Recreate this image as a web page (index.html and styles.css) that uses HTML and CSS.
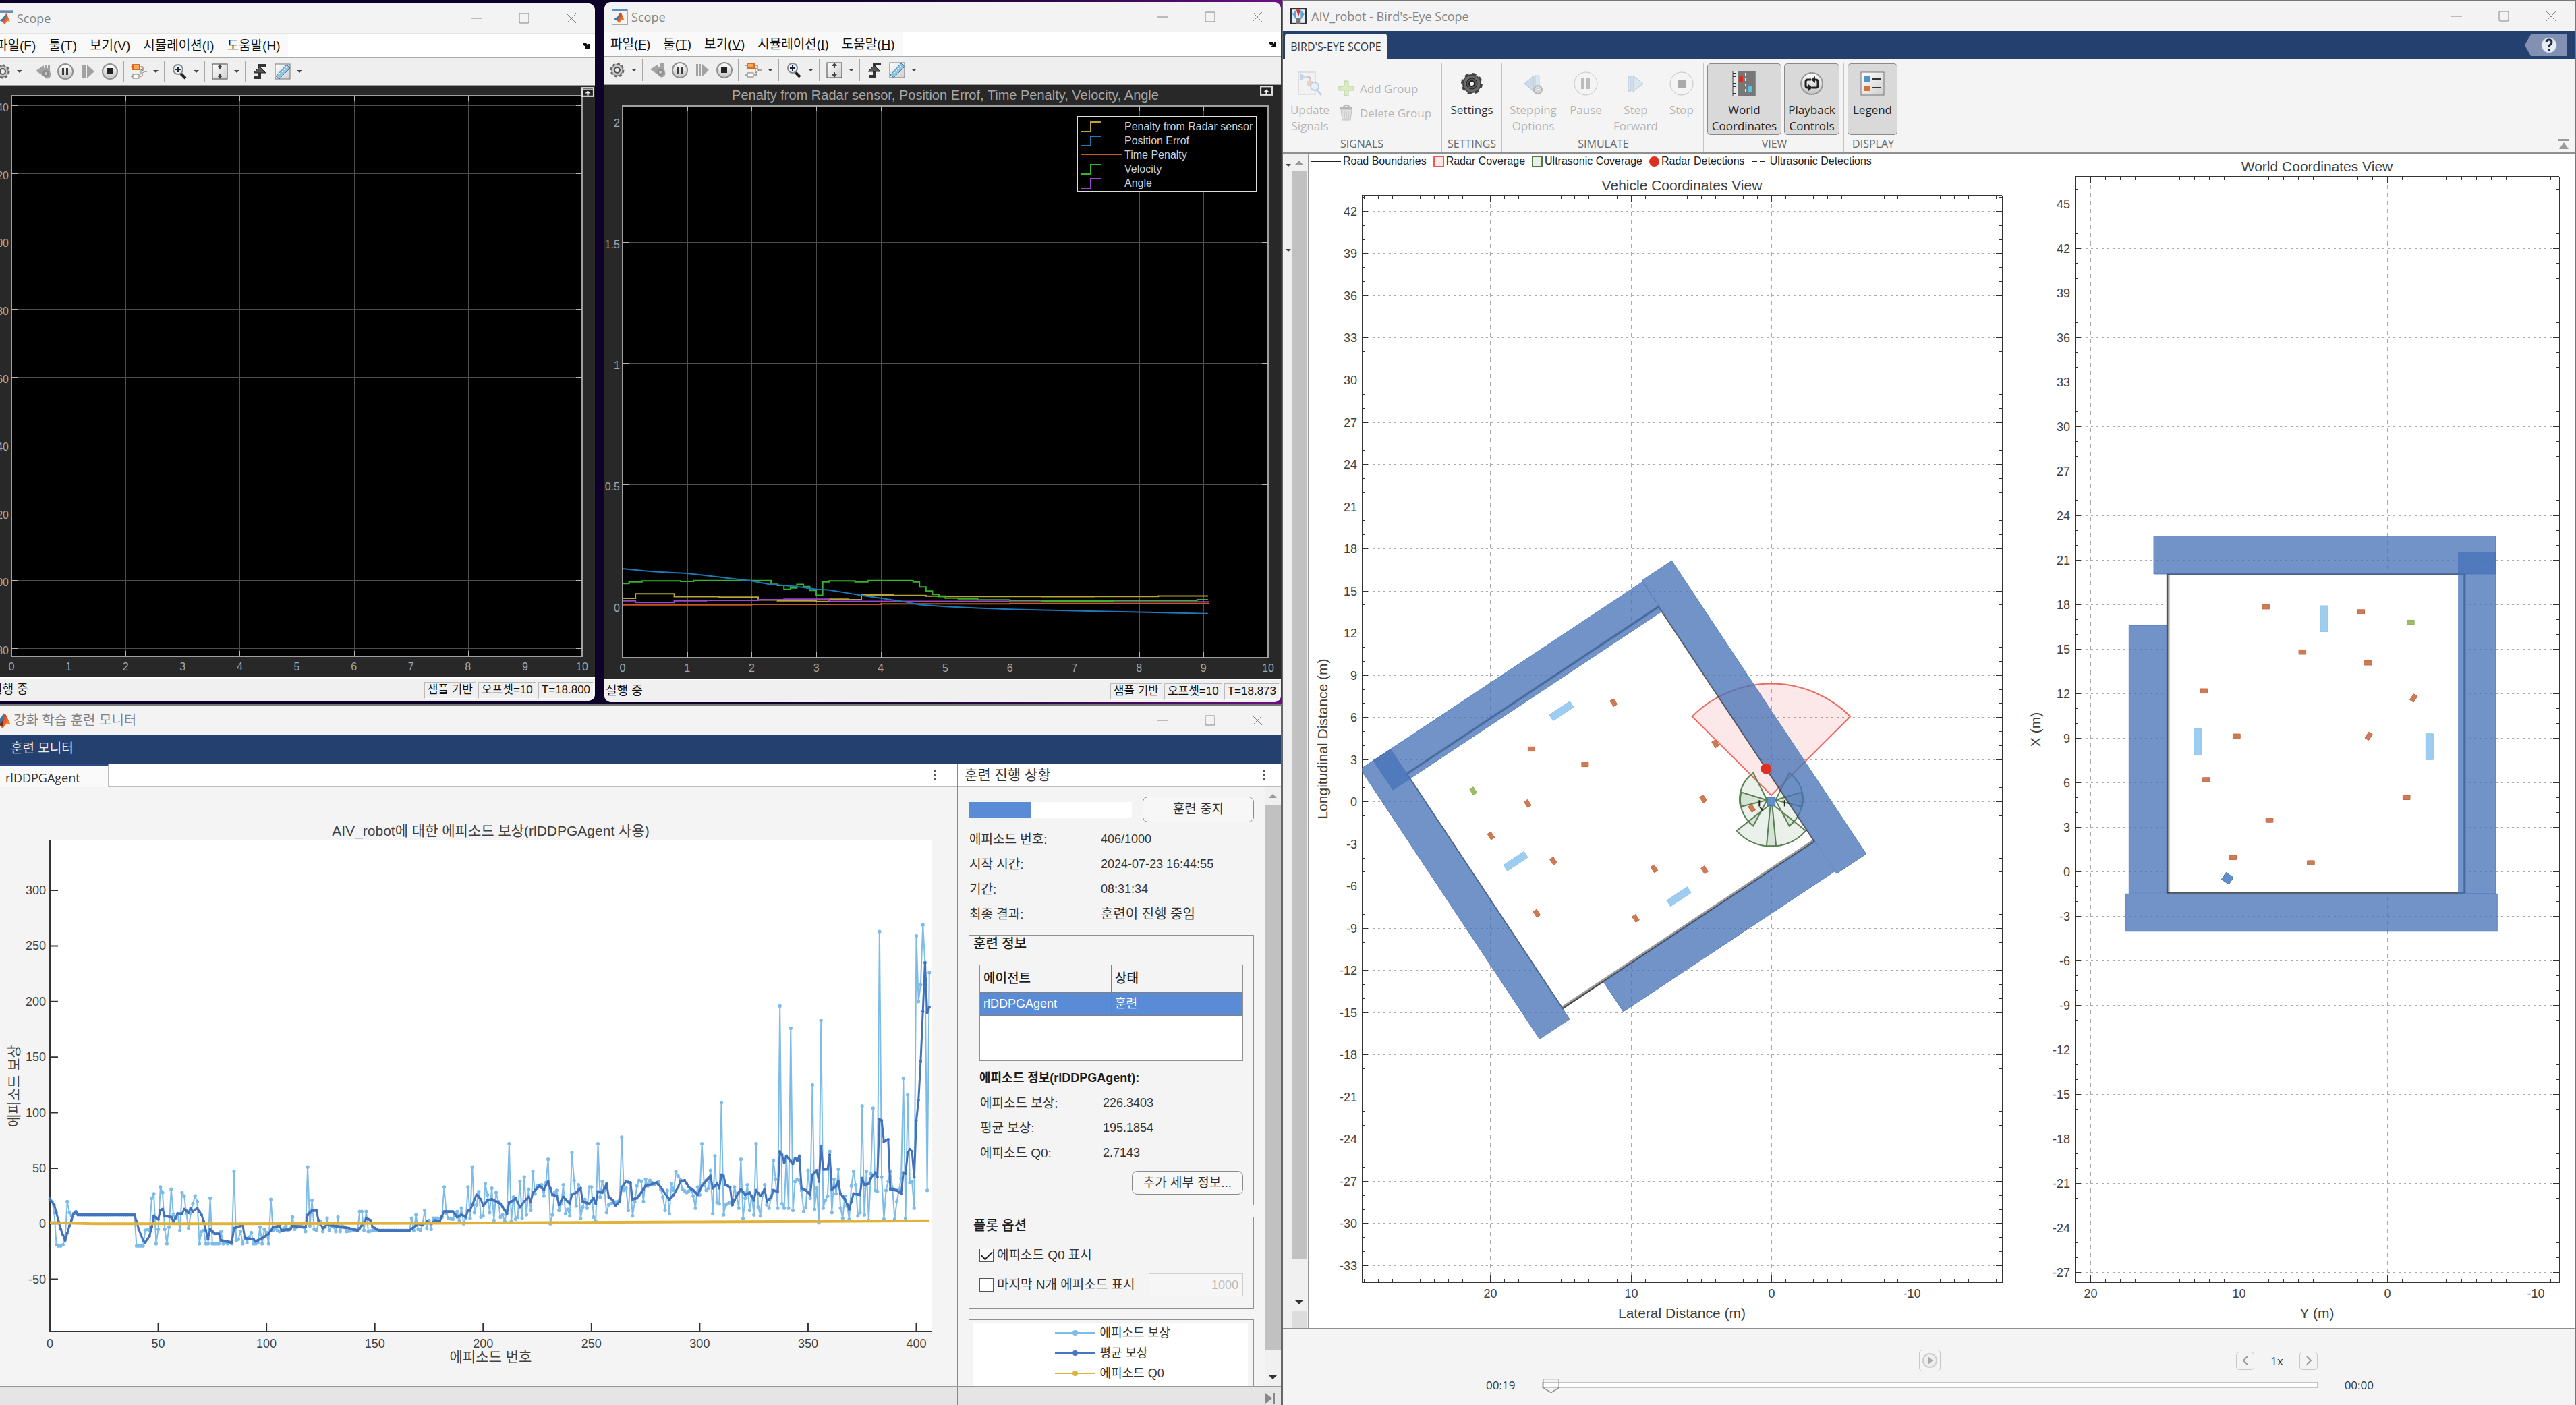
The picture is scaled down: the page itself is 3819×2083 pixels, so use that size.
FILE: index.html
```html
<!DOCTYPE html>
<html lang="ko">
<head>
<meta charset="utf-8">
<meta name="viewport" content="width=device-width, initial-scale=1">
<title>AIV_robot</title>
<link rel="stylesheet" href="styles.css">
<script src="script.js" defer></script>
</head>
<body>
<svg class="sprite" aria-hidden="true">
  <defs>
    <linearGradient id="gBall" x1="0" y1="0" x2="0" y2="1"><stop offset="0" stop-color="#fff"/><stop offset="1" stop-color="#c4c4c4"/></linearGradient>
    <linearGradient id="gFlame" x1="0" y1="0" x2="1" y2="1"><stop offset="0" stop-color="#b5321c"/><stop offset=".55" stop-color="#e8622a"/><stop offset="1" stop-color="#f6b04a"/></linearGradient>
    <linearGradient id="gPage" x1="0" y1="0" x2="1" y2="1"><stop offset="0" stop-color="#fff"/><stop offset="1" stop-color="#cfcfcf"/></linearGradient>
  </defs>
  <symbol id="i-min" viewBox="0 0 16 16"><path d="M0 8h16" stroke="currentColor" fill="none"/></symbol>
  <symbol id="i-max" viewBox="0 0 16 16"><rect x="1" y="1" width="14" height="14" rx="1" stroke="currentColor" fill="none"/></symbol>
  <symbol id="i-close" viewBox="0 0 16 16"><path d="M1 1l14 14M15 1L1 15" stroke="currentColor" fill="none"/></symbol>
  <symbol id="i-caret" viewBox="0 0 8 6"><path d="M0 1h8L4 5z" fill="#444"/></symbol>
  <symbol id="i-dots" viewBox="0 0 4 16"><path d="M1 1h2v2H1zM1 7h2v2H1zM1 13h2v2H1z" fill="#555"/></symbol>
  <symbol id="i-matlab" viewBox="0 0 16 16"><path d="M0 10l5-3 4-6 1 1-3 9-3 1z" fill="#2d7bb8"/><path d="M4 12l3-2 3-9c1 0 4 8 6 11l-4-1-4 5-2-2z" fill="url(#gFlame)"/><path d="M4 12l3-2 2-5-1 9z" fill="#7d2a1c"/></symbol>
  <symbol id="i-scope" viewBox="0 0 24 24"><rect x=".5" y=".5" width="23" height="23" fill="#f4f4f4" stroke="#a9a9a9"/><path d="M1 1h22v3H1z" fill="#5d8fc0"/><path d="M3 15l5-3 4-6 1 1-3 9-3 1z" fill="#2d7bb8"/><path d="M7 16l3-2 3-9c1 0 4 8 6 12l-4-1-4 5-2-2z" fill="url(#gFlame)"/></symbol>
  <symbol id="i-gear" viewBox="0 0 24 24"><circle cx="12" cy="12" r="9" fill="#a9a9a9" stroke="#666" stroke-width="3" stroke-dasharray="4 3"/><circle cx="12" cy="12" r="8" fill="#c9c9c9" stroke="#777"/><circle cx="12" cy="12" r="4" fill="#eee" stroke="#555" stroke-width="2"/></symbol>
  <symbol id="i-back" viewBox="0 0 24 24"><path d="M1 11L13 3v4h2V2h3v5h1V2h3v9l1 4a5 5 0 0 1-10 4z" fill="#a2a2a2"/><circle cx="16" cy="15" r="5" fill="#8e8e8e"/><circle cx="16" cy="15" r="2" fill="#d0d0d0"/></symbol>
  <symbol id="i-pause" viewBox="0 0 24 24"><circle cx="12" cy="12" r="11" fill="url(#gBall)" stroke="#8f8f8f" stroke-width="2"/><path d="M7 7h3v10H7zM13 7h3v10h-3z" fill="#3d3d3d"/></symbol>
  <symbol id="i-step" viewBox="0 0 24 24"><path d="M3 3h3v18H3zM7 3h3v18H7zM11 2l11 10-11 10z" fill="#a2a2a2"/></symbol>
  <symbol id="i-stop" viewBox="0 0 24 24"><circle cx="12" cy="12" r="11" fill="url(#gBall)" stroke="#8f8f8f" stroke-width="2"/><path d="M7 7h9v9H7z" fill="#222"/></symbol>
  <symbol id="i-blocks" viewBox="0 0 24 24"><path d="M0 5h3M14 5h4v5M0 19h3M13 19h4v-4M20 12h4" stroke="#8a5a3a" stroke-width="1" fill="none"/><rect x="3" y="2" width="10" height="7" fill="#f5a95c" stroke="#e06c1a" stroke-width="2"/><rect x="3" y="16" width="9" height="6" fill="#fff" stroke="#777"/><path d="M15 9l5 3-5 4z" fill="#fff" stroke="#777"/></symbol>
  <symbol id="i-zoom" viewBox="0 0 24 24"><path d="M14 15l7 7" stroke="#222" stroke-width="4"/><circle cx="10" cy="9" r="7" fill="#e6f1fa" stroke="#8b8b8b" stroke-width="2"/><path d="M10 5v8M6 9h8" stroke="#223" stroke-width="2"/></symbol>
  <symbol id="i-fit" viewBox="0 0 24 24"><rect x="1" y="1" width="22" height="22" fill="url(#gPage)" stroke="#444" stroke-width="1"/><path d="M12 1l4 5h-3v3h-2V6H8zM12 23l4-5h-3v-3h-2v3H8z" fill="#444"/></symbol>
  <symbol id="i-trigger" viewBox="0 0 24 24"><path d="M3 21h8V3h10" stroke="#333" stroke-width="4" fill="none"/><path d="M11 5l9 9H2z" fill="#555" stroke="#222"/></symbol>
  <symbol id="i-ruler" viewBox="0 0 24 24"><rect x="1" y="1" width="22" height="22" fill="url(#gPage)" stroke="#777"/><path d="M2 19L18 2l5 5L7 23z" fill="#8fc4e6" stroke="#3d7fae"/><path d="M7 14l2 2M10 11l2 2M13 8l2 2M16 5l2 2" stroke="#fff"/></symbol>
  <symbol id="i-dock" viewBox="0 0 18 14"><rect x="1" y="1" width="16" height="12" fill="#222" stroke="#ddd" stroke-width="2"/><path d="M1 3h16" stroke="#ddd"/><path d="M9 5l4 4h-3v3H8V9H5z" fill="#eee"/></symbol>
  <symbol id="i-undock" viewBox="0 0 12 10"><path d="M1 1h4l3 3V2l3 0v7H4V7h2L1 4z" fill="#111"/></symbol>
  <symbol id="i-bird" viewBox="0 0 22 22"><rect x="1" y="1" width="20" height="20" fill="#e8f0f5" stroke="#333" stroke-width="2"/><path d="M3 8l5-6v14zM19 8l-5-6v14z" fill="#56a8d8"/><path d="M8 2h6l-3 10z" fill="#d8322a"/><path d="M8 13h6v8H8z" fill="#777"/></symbol>
  <symbol id="i-update" viewBox="0 0 36 36"><rect x="1" y="1" width="25" height="33" fill="#f2f2f2" stroke="#c9c9c9"/><path d="M3 2v12l9-6z" fill="#c5d3e8"/><path d="M12 8h6v6" stroke="#aaa" fill="none"/><rect x="13" y="14" width="9" height="8" fill="#f0cdbd"/><circle cx="25" cy="22" r="6" fill="#e6f0f8" stroke="#bfd0e6" stroke-width="2"/><path d="M28 27l7 8" stroke="#c5cfe8" stroke-width="3"/></symbol>
  <symbol id="i-plus" viewBox="0 0 24 24"><path d="M9 1h6v8h8v6h-8v8H9v-8H1V9h8z" fill="#dcebc4" stroke="#b9cfa0"/></symbol>
  <symbol id="i-trash" viewBox="0 0 24 24"><path d="M3 5h18M8 4c0-4 8-4 8 0" stroke="#b5b5b5" stroke-width="2" fill="none"/><path d="M4 7h16l-2 16H6z" fill="#e0e0e0" stroke="#bdbdbd"/><path d="M9 9v12M12 9v12M15 9v12" stroke="#bbb"/></symbol>
  <symbol id="i-cog" viewBox="0 0 36 36"><circle cx="18" cy="18" r="14" fill="#555" stroke="#444" stroke-width="4" stroke-dasharray="6 5"/><circle cx="18" cy="18" r="13" fill="#6a6a6a" stroke="#3a3a3a"/><circle cx="18" cy="18" r="8" fill="#555" stroke="#222"/><circle cx="18" cy="18" r="4" fill="#f4f4f4" stroke="#222" stroke-width="2"/></symbol>
  <symbol id="i-stepopt" viewBox="0 0 36 36"><path d="M5 18L19 6v24z" fill="#cbdbec" stroke="#b4c6d8"/><path d="M21 6h6v22h-6z" fill="#dbe6f1" stroke="#b9c9da"/><circle cx="25" cy="27" r="6" fill="#ddd" stroke="#b5b5b5" stroke-width="2"/><circle cx="25" cy="27" r="2" fill="#fff" stroke="#b5b5b5"/></symbol>
  <symbol id="i-bigpause" viewBox="0 0 36 36"><circle cx="18" cy="18" r="17" fill="#f4f4f4" stroke="#c4c4c4"/><path d="M11 10h5v16h-5zM19 10h5v16h-5z" fill="#bcbcbc"/></symbol>
  <symbol id="i-bigstep" viewBox="0 0 36 36"><path d="M7 7h4v22H7zM14 6l15 12-15 12z" fill="#dbe6f1" stroke="#b4c6d8"/></symbol>
  <symbol id="i-bigstop" viewBox="0 0 36 36"><circle cx="18" cy="18" r="17" fill="#f4f4f4" stroke="#c4c4c4"/><path d="M12 12h12v12H12z" fill="#aaa"/></symbol>
  <symbol id="i-world" viewBox="0 0 36 36"><path d="M0 0h36v36H0z" fill="#e8e8e8"/><path d="M9 0h25v36H9z" fill="#777"/><path d="M20 2v32" stroke="#eee" stroke-width="2" stroke-dasharray="4 4"/><rect x="10" y="6" width="6" height="9" fill="#e02a1e"/><rect x="24" y="21" width="5" height="9" fill="#56c4e0"/><path d="M1 0v36M35 0v36" stroke="#333"/><path d="M3 2v34" stroke="#333" stroke-dasharray="1 4" stroke-width="4"/></symbol>
  <symbol id="i-playback" viewBox="0 0 36 36"><circle cx="18" cy="18" r="16" fill="url(#gBall)" stroke="#999" stroke-width="2"/><path d="M17 12h-5q-3 0-3 3v6q0 3 3 3h2M19 24h5q3 0 3-3v-6q0-3-3-3h-2" stroke="#222" stroke-width="3" fill="none"/><path d="M13 19l6 5-6 5zM23 7l-6 5 6 5z" fill="#222"/></symbol>
  <symbol id="i-legend" viewBox="0 0 36 36"><rect x="1" y="1" width="34" height="34" fill="url(#gPage)" stroke="#777" stroke-width="1"/><rect x="6" y="7" width="9" height="8" fill="#4a94cf"/><rect x="6" y="21" width="9" height="8" fill="#d9702e"/><path d="M18 11h12M18 24h12" stroke="#333" stroke-width="2"/></symbol>
  <symbol id="i-help" viewBox="0 0 62 32"><path d="M9 0h53v32H9L0 16z" fill="#8190b3"/><circle cx="36" cy="16" r="11" fill="#e6edf4" stroke="#b7c3d6"/><path d="M32 12q0-4 4-4t4 4q0 2-2 3t-2 4M36 22v2" stroke="#222a3a" stroke-width="3" fill="none"/></symbol>
  <symbol id="i-collapse" viewBox="0 0 16 16"><path d="M0 0h16v3H0zM8 5l7 10H1z" fill="#9a9a9a"/></symbol>
  <symbol id="i-up" viewBox="0 0 12 6"><path d="M0 6h12L6 0z" fill="currentColor"/></symbol>
  <symbol id="i-down" viewBox="0 0 12 6"><path d="M0 0h12L6 6z" fill="currentColor"/></symbol>
  <symbol id="i-end" viewBox="0 0 16 16"><path d="M1 0l10 8-10 8zM12 0h3v16h-3z" fill="#888"/></symbol>
  <symbol id="i-play" viewBox="0 0 24 24"><circle cx="12" cy="12" r="10" fill="#eee" stroke="#ccc" stroke-width="2"/><path d="M9 6l8 6-8 6z" fill="#aaa"/></symbol>
  <symbol id="i-prev" viewBox="0 0 12 16"><path d="M9 2L3 8l6 6" stroke="#999" stroke-width="2" fill="none"/></symbol>
  <symbol id="i-next" viewBox="0 0 12 16"><path d="M3 2l6 6-6 6" stroke="#999" stroke-width="2" fill="none"/></symbol>
</svg>

<main class="desktop">
  <div class="left">
    <div class="scopes">

      <section class="scope scope-a" aria-label="Scope">
        <div class="scope-inner">
          <header class="titlebar">
            <svg class="title-icon"><use href="#i-scope"/></svg><span class="title">Scope</span>
            <div class="win-btns"><button aria-label="최소화"><svg><use href="#i-min"/></svg></button><button aria-label="최대화"><svg><use href="#i-max"/></svg></button><button aria-label="닫기"><svg><use href="#i-close"/></svg></button></div>
          </header>
          <nav class="menubar">
            <div class="menus"><button>파일(<u>F</u>)</button><button>툴(<u>T</u>)</button><button>보기(<u>V</u>)</button><button>시뮬레이션(<u>I</u>)</button><button>도움말(<u>H</u>)</button></div>
            <button class="undock" aria-label="도킹"><svg><use href="#i-undock"/></svg></button>
          </nav>
          <div class="toolbar">
            <button aria-label="설정"><svg><use href="#i-gear"/></svg></button><button class="caret" aria-label="설정 메뉴"><svg><use href="#i-caret"/></svg></button>
            <i class="sep"></i>
            <button aria-label="뒤로"><svg><use href="#i-back"/></svg></button><button aria-label="일시 중지"><svg><use href="#i-pause"/></svg></button><button aria-label="앞으로"><svg><use href="#i-step"/></svg></button><button aria-label="중지"><svg><use href="#i-stop"/></svg></button>
            <i class="sep"></i>
            <button aria-label="블록"><svg><use href="#i-blocks"/></svg></button><button class="caret" aria-label="블록 메뉴"><svg><use href="#i-caret"/></svg></button>
            <i class="sep"></i>
            <button aria-label="확대"><svg><use href="#i-zoom"/></svg></button><button class="caret" aria-label="확대 메뉴"><svg><use href="#i-caret"/></svg></button>
            <i class="sep"></i>
            <button aria-label="맞춤"><svg><use href="#i-fit"/></svg></button><button class="caret" aria-label="맞춤 메뉴"><svg><use href="#i-caret"/></svg></button>
            <i class="sep"></i>
            <button aria-label="트리거"><svg><use href="#i-trigger"/></svg></button><button aria-label="측정"><svg><use href="#i-ruler"/></svg></button><button class="caret" aria-label="측정 메뉴"><svg><use href="#i-caret"/></svg></button>
          </div>
          <div class="scope-body">
            <svg class="plot dark" id="plot-scope-a"></svg>
            <button class="dock" aria-label="축 최대화"><svg><use href="#i-dock"/></svg></button>
          </div>
          <footer class="status"><span class="state">실행 중</span><span class="cell">샘플 기반</span><span class="cell">오프셋=10</span><span class="cell">T=18.800</span></footer>
        </div>
      </section>

      <section class="scope scope-b" aria-label="Scope">
        <div class="scope-inner">
          <header class="titlebar">
            <svg class="title-icon"><use href="#i-scope"/></svg><span class="title">Scope</span>
            <div class="win-btns"><button aria-label="최소화"><svg><use href="#i-min"/></svg></button><button aria-label="최대화"><svg><use href="#i-max"/></svg></button><button aria-label="닫기"><svg><use href="#i-close"/></svg></button></div>
          </header>
          <nav class="menubar">
            <div class="menus"><button>파일(<u>F</u>)</button><button>툴(<u>T</u>)</button><button>보기(<u>V</u>)</button><button>시뮬레이션(<u>I</u>)</button><button>도움말(<u>H</u>)</button></div>
            <button class="undock" aria-label="도킹"><svg><use href="#i-undock"/></svg></button>
          </nav>
          <div class="toolbar">
            <button aria-label="설정"><svg><use href="#i-gear"/></svg></button><button class="caret" aria-label="설정 메뉴"><svg><use href="#i-caret"/></svg></button>
            <i class="sep"></i>
            <button aria-label="뒤로"><svg><use href="#i-back"/></svg></button><button aria-label="일시 중지"><svg><use href="#i-pause"/></svg></button><button aria-label="앞으로"><svg><use href="#i-step"/></svg></button><button aria-label="중지"><svg><use href="#i-stop"/></svg></button>
            <i class="sep"></i>
            <button aria-label="블록"><svg><use href="#i-blocks"/></svg></button><button class="caret" aria-label="블록 메뉴"><svg><use href="#i-caret"/></svg></button>
            <i class="sep"></i>
            <button aria-label="확대"><svg><use href="#i-zoom"/></svg></button><button class="caret" aria-label="확대 메뉴"><svg><use href="#i-caret"/></svg></button>
            <i class="sep"></i>
            <button aria-label="맞춤"><svg><use href="#i-fit"/></svg></button><button class="caret" aria-label="맞춤 메뉴"><svg><use href="#i-caret"/></svg></button>
            <i class="sep"></i>
            <button aria-label="트리거"><svg><use href="#i-trigger"/></svg></button><button aria-label="측정"><svg><use href="#i-ruler"/></svg></button><button class="caret" aria-label="측정 메뉴"><svg><use href="#i-caret"/></svg></button>
          </div>
          <div class="scope-body">
            <svg class="plot dark" id="plot-scope-b"></svg>
            <button class="dock" aria-label="축 최대화"><svg><use href="#i-dock"/></svg></button>
            <ul class="signal-legend">
              <li><svg class="c-yellow"><path d="M0 17h14V3h16"/></svg>Penalty from Radar sensor</li>
              <li><svg class="c-blue"><path d="M0 17h14V3h16"/></svg>Position Errof</li>
              <li><svg class="c-orange"><path d="M0 9h60"/></svg>Time Penalty</li>
              <li><svg class="c-green"><path d="M0 17h14V3h16"/></svg>Velocity</li>
              <li><svg class="c-purple"><path d="M0 17h14V3h16"/></svg>Angle</li>
            </ul>
          </div>
          <footer class="status"><span class="state">실행 중</span><span class="cell">샘플 기반</span><span class="cell">오프셋=10</span><span class="cell">T=18.873</span></footer>
        </div>
      </section>
    </div>

    <section class="training" aria-label="강화 학습 훈련 모니터">
      <header class="titlebar">
        <svg class="title-icon"><use href="#i-matlab"/></svg><h1 class="title">강화 학습 훈련 모니터</h1>
        <div class="win-btns"><button aria-label="최소화"><svg><use href="#i-min"/></svg></button><button aria-label="최대화"><svg><use href="#i-max"/></svg></button><button aria-label="닫기"><svg><use href="#i-close"/></svg></button></div>
      </header>
      <div class="navy">훈련 모니터</div>
      <div class="training-main">
        <div class="figure">
          <div class="tabs"><button class="tab">rlDDPGAgent</button><button class="more" aria-label="더 보기"><svg><use href="#i-dots"/></svg></button></div>
          <div class="figure-body"><svg class="plot light" id="plot-training"></svg></div>
        </div>
        <aside class="panel">
          <div class="panel-head"><h2>훈련 진행 상황</h2><button class="more" aria-label="더 보기"><svg><use href="#i-dots"/></svg></button></div>
          <div class="panel-scroll">
            <div class="panel-content">
              <div class="progress-row"><progress value="384" max="1000" aria-label="진행률"></progress><button class="btn">훈련 중지</button></div>
              <dl class="facts">
                <dt>에피소드 번호:</dt><dd>406/1000</dd>
                <dt>시작 시간:</dt><dd>2024-07-23 16:44:55</dd>
                <dt>기간:</dt><dd>08:31:34</dd>
                <dt>최종 결과:</dt><dd class="ko">훈련이 진행 중임</dd>
              </dl>
              <section class="box info">
                <h3>훈련 정보</h3>
                <div class="box-body">
                  <div class="table-wrap">
                    <table><thead><tr><th>에이전트</th><th>상태</th></tr></thead><tbody><tr><td>rlDDPGAgent</td><td>훈련</td></tr></tbody></table>
                  </div>
                  <h4>에피소드 정보(rlDDPGAgent):</h4>
                  <dl class="facts">
                    <dt>에피소드 보상:</dt><dd>226.3403</dd>
                    <dt>평균 보상:</dt><dd>195.1854</dd>
                    <dt>에피소드 Q0:</dt><dd>2.7143</dd>
                  </dl>
                  <button class="btn detail">추가 세부 정보...</button>
                </div>
              </section>
              <section class="box options">
                <h3>플롯 옵션</h3>
                <div class="box-body">
                  <div class="opt"><input type="checkbox" id="q0" checked><label for="q0">에피소드 Q0 표시</label></div>
                  <div class="opt"><input type="checkbox" id="lastn"><label for="lastn">마지막 N개 에피소드 표시</label><input class="num" type="text" value="1000" aria-label="에피소드 개수" disabled></div>
                </div>
              </section>
              <section class="box series">
                <ul>
                  <li><svg class="s-ep"><path d="M0 10h60"/><circle cx="30" cy="10" r="3"/></svg>에피소드 보상</li>
                  <li><svg class="s-avg"><path d="M0 10h60"/><circle cx="30" cy="10" r="3"/></svg>평균 보상</li>
                  <li><svg class="s-q0"><path d="M0 10h60"/><circle cx="30" cy="10" r="3"/></svg>에피소드 Q0</li>
                </ul>
              </section>
            </div>
            <div class="scrollbar"><svg class="arr dim"><use href="#i-up"/></svg><i class="thumb"></i><svg class="arr"><use href="#i-down"/></svg></div>
          </div>
        </aside>
      </div>
      <footer class="train-status"><span></span><span class="end"><svg><use href="#i-end"/></svg></span></footer>
    </section>
  </div>

  <section class="bird" aria-label="AIV_robot - Bird's-Eye Scope">
    <header class="titlebar">
      <svg class="title-icon"><use href="#i-bird"/></svg><h1 class="title">AIV_robot - Bird's-Eye Scope</h1>
      <div class="win-btns"><button aria-label="Minimize"><svg><use href="#i-min"/></svg></button><button aria-label="Maximize"><svg><use href="#i-max"/></svg></button><button aria-label="Close"><svg><use href="#i-close"/></svg></button></div>
    </header>
    <div class="ribbon-tabs"><button class="ribbon-tab">BIRD'S-EYE SCOPE</button><button class="help" aria-label="Help"><svg><use href="#i-help"/></svg></button></div>
    <div class="ribbon">
      <div class="group g-signals"><div class="tools">
        <button class="tool w76" disabled><svg><use href="#i-update"/></svg><span>Update<br>Signals</span></button>
        <div class="stack"><button disabled><svg><use href="#i-plus"/></svg>Add Group</button><button disabled><svg><use href="#i-trash"/></svg>Delete Group</button></div>
      </div><h2>SIGNALS</h2></div>
      <div class="group g-settings"><div class="tools"><button class="tool w82"><svg><use href="#i-cog"/></svg><span>Settings</span></button></div><h2>SETTINGS</h2></div>
      <div class="group g-simulate"><div class="tools">
        <button class="tool w82" disabled><svg><use href="#i-stepopt"/></svg><span>Stepping<br>Options</span></button>
        <button class="tool w74" disabled><svg><use href="#i-bigpause"/></svg><span>Pause</span></button>
        <button class="tool w74" disabled><svg><use href="#i-bigstep"/></svg><span>Step<br>Forward</span></button>
        <button class="tool w62" disabled><svg><use href="#i-bigstop"/></svg><span>Stop</span></button>
      </div><h2>SIMULATE</h2></div>
      <div class="group g-view"><div class="tools">
        <button class="tool w110 on"><svg><use href="#i-world"/></svg><span>World<br>Coordinates</span></button>
        <button class="tool w82 on"><svg><use href="#i-playback"/></svg><span>Playback<br>Controls</span></button>
      </div><h2>VIEW</h2></div>
      <div class="group g-display"><div class="tools"><button class="tool w74 on"><svg><use href="#i-legend"/></svg><span>Legend</span></button></div><h2>DISPLAY</h2></div>
      <button class="collapse" aria-label="Collapse"><svg><use href="#i-collapse"/></svg></button>
    </div>
    <div class="views">
      <div class="strip">
        <div class="gutter"><svg><use href="#i-caret"/></svg><svg><use href="#i-caret"/></svg></div>
        <div class="strip-col"><div class="scrollbar"><svg class="arr dim"><use href="#i-up"/></svg><i class="thumb"></i><svg class="arr"><use href="#i-down"/></svg></div><i class="corner"></i></div>
      </div>
      <div class="view vehicle">
        <ul class="legend">
          <li><svg class="k-line"><path d="M0 9h44"/></svg>Road Boundaries</li>
          <li><i class="k-radar"></i>Radar Coverage</li>
          <li><i class="k-ultra"></i>Ultrasonic Coverage</li>
          <li><i class="k-dot"></i>Radar Detections</li>
          <li><svg class="k-dash"><path d="M0 9h20"/></svg>Ultrasonic Detections</li>
        </ul>
        <div class="view-body"><svg class="plot light" id="plot-vehicle"></svg></div>
      </div>
      <div class="view world"><div class="view-body"><svg class="plot light" id="plot-world"></svg></div></div>
    </div>
    <footer class="playback">
      <button class="pb play" aria-label="Play"><svg><use href="#i-play"/></svg></button>
      <div class="speed"><button class="pb" aria-label="Slower"><svg><use href="#i-prev"/></svg></button><span>1x</span><button class="pb" aria-label="Faster"><svg><use href="#i-next"/></svg></button></div>
      <label class="t-now" for="seek">00:19</label>
      <input id="seek" type="range" min="0" max="100" value="0">
      <span class="t-end">00:00</span>
    </footer>
  </section>
</main>
</body>
</html>
```
FILE: styles.css
```css
* { box-sizing: border-box; }
html, body { height: 100%; }
body { margin: 0; font-family: "Open Sans", "Noto Sans CJK KR", sans-serif; font-size: 17px; color: #333; }
button { font: inherit; color: inherit; background: none; border: 0; padding: 0; margin: 0; }
h1, h2, h3, h4, ul, dl, dd { margin: 0; padding: 0; font-weight: normal; }
ul { list-style: none; }
svg { display: block; flex: none; }
.sprite { position: absolute; width: 0; height: 0; }

.desktop { display: grid; grid-template-columns: minmax(0, 1901fr) minmax(0, 1918fr); grid-template-rows: minmax(0, 1fr); height: 100vh; overflow: hidden; background: #0e0129; }
.left { display: grid; grid-template-columns: minmax(0, 1fr); grid-template-rows: minmax(0, 1044fr) minmax(0, 1039fr); min-height: 0; background: linear-gradient(90deg, #0e0129 0 48%, #6d0f86 100%); }
.scopes { display: flex; gap: 14px; min-height: 0; background: linear-gradient(90deg, #0e0129 0 60%, transparent); }

/* shared window chrome */
.titlebar { display: flex; align-items: center; flex: none; height: 44px; background: #f3f3f3; color: #848484; }
.title { font-size: 18px; white-space: nowrap; }
.title-icon { width: 24px; height: 24px; }
.win-btns { display: flex; margin-left: auto; align-self: stretch; }
.win-btns button { width: 70px; display: grid; place-items: center; }
.win-btns svg { width: 16px; height: 16px; }
.scrollbar { display: flex; flex-direction: column; align-items: center; background: #f0f0f0; color: #333; }
.scrollbar .arr { width: 12px; height: 6px; margin: 10px 0; }
.scrollbar .dim { color: #999; }
.scrollbar .thumb { width: 100%; background: #c1c1c1; }

/* scopes */
.scope { min-width: 0; display: flex; overflow: hidden; border-radius: 0 10px 10px 0; background: #f0f0f0; }
.scope-a { flex: 883 0 0; margin: 5px 0; }
.scope-b { flex: 1004 0 0; margin: 3px 2px 3px 0; border-radius: 10px; }
.scope-inner { flex: 1; min-width: 0; display: flex; flex-direction: column; }
.scope-a .scope-inner { margin-left: -15px; }
.scope .titlebar { height: 44px; padding-left: 11px; gap: 5px; }
.menubar { display: flex; align-items: stretch; flex: none; height: 36px; background: #fff; border-top: 1px solid #e4e4e4; color: #111; font-family: "Liberation Sans", "Noto Sans CJK KR", sans-serif; font-size: 19px; line-height: 24px; }
.menus { display: flex; gap: 19px; padding: 0 12px 0 9px; background: #f9f9f9; }
.menus button { white-space: nowrap; }
.undock { margin-left: auto; padding-right: 6px; }
.undock svg { width: 12px; height: 10px; }
.toolbar { display: flex; align-items: center; flex: none; height: 43px; padding-left: 2px; background: #efefef; border-top: 1px solid #aaa; border-bottom: 2px solid #999; }
.toolbar button { width: 33px; height: 32px; display: grid; place-items: center; }
.toolbar button svg { width: 24px; height: 24px; }
.toolbar .caret { width: 17px; }
.toolbar .caret svg { width: 8px; height: 6px; }
.sep { width: 1px; height: 32px; margin: 0 5px 0 4px; background: #a8a8a8; }
.scope-body { position: relative; flex: 1; min-height: 0; background: #282828; }
.dock { position: absolute; top: 1px; right: 1px; }
.scope-b .dock { right: 12px; }
.dock svg { width: 19px; height: 15px; }
.status { display: flex; align-items: stretch; flex: none; gap: 3px; height: 35px; padding: 5px 2px 3px; background: #f0f0f0; border-top: 2px solid #fff; color: #111; font-family: "Liberation Sans", "Noto Sans CJK KR", sans-serif; font-size: 17px; line-height: 22px; white-space: nowrap; }
.state { flex: 1; font-size: 18px; }
.cell { border: 1px solid #bbb; border-right-color: #fff; border-bottom-color: #fff; padding: 0 4px; }
.signal-legend { position: absolute; top: 46px; right: 35px; width: 268px; padding: 3px 0 1px 5px; border: 2px solid #ddd; background: #000; color: #d2d2d2; font: 16px/21px "Liberation Sans", sans-serif; }
.signal-legend li { display: flex; align-items: center; gap: 4px; white-space: nowrap; }
.signal-legend svg { width: 60px; height: 20px; fill: none; stroke-width: 2; }
.c-yellow { stroke: #b8a535; } .c-blue { stroke: #1f78b8; } .c-orange { stroke: #c8571a; } .c-green { stroke: #35b52c; } .c-purple { stroke: #9c46cc; }

/* plots */
.plot { position: absolute; inset: 0; width: 100%; height: 100%; }
.plot text { font-family: "Liberation Sans", "Noto Sans CJK KR", sans-serif; font-size: 18px; }
.plot .ptitle, .plot .plabel { font-size: 21px; }
.dark text { fill: #a6a6a6; font-size: 16px; }
.plot.dark .ptitle { font-size: 20px; }
.dark .frame { fill: #000; stroke: #a0a0a0; stroke-width: 2; }
.dark .grid { stroke: #4d4d4d; stroke-width: 1; fill: none; }
.dark .tick { stroke: #b5b5b5; stroke-width: 1; fill: none; }
.dark .sig { fill: none; stroke-width: 2; }
.light text { fill: #404040; }
.light .axis, .light .tick { stroke: #333; stroke-width: 1; fill: none; }
.light .axis { stroke-width: 2; }
.light .frame { fill: #fff; stroke: #333; stroke-width: 1; }
.light .gv { stroke: #aaa; stroke-dasharray: 6 6; fill: none; }
.light .gh { stroke: #aaa; stroke-dasharray: 3 5; fill: none; }
.wall { fill: #4672b8; fill-opacity: .77; stroke: #4672b8; stroke-opacity: .8; }
.road { fill: none; stroke: #222; stroke-width: 2; stroke-opacity: .75; }
.road-wide { fill: none; stroke: #222; stroke-width: 4; stroke-opacity: .45; }
.cone { fill: #cf7a57; stroke: #c4693f; }
.bush { fill: #9dbd68; stroke: #8cb050; }
.human { fill: #9dcdf0; stroke: #8ec3ea; }
.ego { fill: #648dcb; stroke: #4672b8; }
.radar { fill: #e8302a; fill-opacity: .11; stroke: #ee6a5f; stroke-width: 2; }
.ultra { fill: #2d6b2d; fill-opacity: .1; stroke: #5a8050; stroke-width: 2; }
.det { fill: #df2f20; }
.udet { fill: none; stroke: #222; stroke-width: 2; }

/* training monitor */
.training { display: flex; flex-direction: column; min-height: 0; border-top: 2px solid #777; border-right: 2px solid #666; background: #f4f4f4; font-family: "Liberation Sans", "Noto Sans CJK KR", sans-serif; }
.training .titlebar { gap: 4px; }
.training .title { font-size: 20px; line-height: 24px; }
.training .title-icon { width: 24px; margin-left: -8px; }
.navy { flex: none; height: 42px; padding-left: 16px; line-height: 40px; font-size: 19px; color: #e8ecf4; background: #24406e; }
.training-main { flex: 1; min-height: 0; display: flex; }
.figure { flex: 1; min-width: 0; display: flex; flex-direction: column; }
.tabs, .panel-head { display: flex; justify-content: space-between; flex: none; height: 35px; background: #fff; border-bottom: 1px solid #bbb; }
.tab { width: 161px; height: 35px; padding: 3px 0 0 8px; text-align: left; font-size: 18px; font-family: "Open Sans", sans-serif; background: #fafafa; border-top: 3px solid #2a4a86; border-right: 1px solid #bbb; line-height: 26px; }
.more { padding: 0 31px; }
.more svg { width: 4px; height: 16px; }
.panel-head .more { padding: 0 23px; }
.figure-body { position: relative; flex: 1; }
.panel { width: 480px; flex: none; display: flex; flex-direction: column; border-left: 2px solid #888; }
.panel-head h2 { padding-left: 9px; font-size: 21px; line-height: 34px; }
.panel-scroll { flex: 1; min-height: 0; display: flex; }
.panel-content { flex: 1; min-width: 0; overflow: hidden; padding: 14px 16px 0 15px; }
.panel-scroll .scrollbar { width: 24px; justify-content: space-between; }
.panel-scroll .thumb { height: 91%; margin-bottom: auto; }
.progress-row { display: flex; align-items: center; gap: 16px; }
progress { flex: 1; min-width: 0; height: 23px; appearance: none; border: 0; background: #fff; }
progress::-webkit-progress-bar { background: #fff; }
progress::-webkit-progress-value { background: #5a8bd7; }
.btn { width: 165px; height: 38px; border: 1px solid #8a8a8a; border-radius: 8px; background: #f7f7f7; font-size: 19px; line-height: 24px; }
.facts { display: grid; grid-template-columns: 196px 1fr; margin-top: 7px; line-height: 37px; }
.facts dt { font-size: 19px; padding-left: 1px; }
.facts dd { font-size: 18px; }
.facts .ko { font-size: 20px; }
.box { border: 1px solid #909090; }
.box h3 { height: 28px; padding-left: 6px; border-bottom: 1px solid #909090; font-size: 20px; font-weight: 500; line-height: 24px; color: #1d1d1d; }
.info { margin-top: 12px; }
.info .box-body { padding: 15px 15px 15px; }
.table-wrap { height: 143px; background: #fff; border: 1px solid #909090; }
table { width: 100%; border-collapse: collapse; table-layout: fixed; font-size: 18px; line-height: 24px; text-align: left; }
th { height: 40px; padding: 0 5px; background: #f4f4f4; font-weight: 500; font-size: 19px; color: #1d1d1d; }
td { height: 34px; padding: 0 5px; background: #5a8bd7; color: #fff; border: 1px solid #808080; }
th + th { border-left: 1px solid #808080; }
td:first-child { border-left: 0; }
td:last-child { border-right: 0; }
h4 { margin-top: 7px; font-size: 18px; font-weight: bold; line-height: 37px; color: #1d1d1d; }
.info .facts { margin-top: 0; grid-template-columns: 183px 1fr; }
.detail { display: block; height: 35px; margin: 8px 0 0 auto; }
.options { margin-top: 17px; }
.options .box-body { padding: 11px 15px 17px; display: grid; gap: 10px; }
.opt { display: flex; align-items: center; height: 34px; gap: 5px; font-size: 19px; line-height: 24px; white-space: nowrap; }
.opt input[type=checkbox] { appearance: none; width: 21px; height: 20px; margin: 0; flex: none; border: 1px solid #555; background: #fff; display: grid; place-items: center; }
.opt input:checked::after { content: ""; width: 14px; height: 7px; border: solid #222; border-width: 0 0 2px 2px; rotate: -45deg; translate: 0 -2px; }
.num { width: 140px; height: 34px; margin-left: auto; padding: 0 6px; border: 1px solid #cfcfcf; background: #f6f6f6; text-align: right; color: #bbb; font: 18px "Liberation Sans", sans-serif; }
.series { margin-top: 16px; padding: 4px 8px 20px 5px; }
.series ul { display: grid; gap: 10px; padding: 5px 0 10px 30%; background: #fff; }
.series li { display: flex; gap: 6px; font-size: 18px; line-height: 20px; white-space: nowrap; }
.series svg { width: 60px; height: 20px; stroke-width: 2; }
.s-ep { stroke: #7dbce8; fill: #7dbce8; } .s-avg { stroke: #4277c4; fill: #4277c4; } .s-q0 { stroke: #dfb23c; fill: #dfb23c; }
.train-status { display: flex; justify-content: space-between; height: 28px; flex: none; border-top: 2px solid #999; background: #e5e5e5; }
.train-status .end { width: 480px; padding: 8px 8px 0 0; border-left: 2px solid #888; }
.train-status svg { width: 16px; height: 16px; margin-left: auto; }
.line-ep { fill: none; stroke: #7dbce8; stroke-width: 2; stroke-linejoin: round; }
.mark-ep { fill: #7dbce8; }
.line-avg { fill: none; stroke: #4272bb; stroke-width: 3; stroke-linejoin: round; }
.mark-avg { fill: #4272bb; }
.line-q0 { fill: none; stroke: #dfb23c; stroke-width: 4; }

/* bird's-eye scope */
.bird { display: flex; flex-direction: column; min-height: 0; border-left: 1px solid #666; border-right: 2px solid #777; border-top: 2px solid #777; background: #f4f4f4; }
.bird .titlebar { padding-left: 11px; gap: 7px; }
.ribbon-tabs { display: flex; justify-content: space-between; align-items: flex-end; flex: none; height: 42px; padding: 0 12px 0 3px; background: #24406e; }
.ribbon-tab { width: 151px; height: 38px; border-radius: 4px 4px 0 0; background: #f4f4f4; font-size: 16px; }
.help { align-self: center; }
.help svg { width: 62px; height: 32px; }
.ribbon { display: flex; height: 140px; flex: none; padding-top: 6px; background: #f4f4f4; border-bottom: 2px solid #909090; }
.group { position: relative; display: flex; flex-direction: column; padding-left: 5px; border-right: 1px solid #c4c4c4; }
.g-signals { width: 236px; padding-left: 2px; } .g-settings { width: 89px; padding-left: 3px; } .g-simulate { width: 299px; } .g-view { width: 208px; } .g-display { width: 85px; }
.tools { display: flex; height: 109px; }
.g-view .tools { gap: 4px; }
.group h2 { margin-left: -3px; text-align: center; font-size: 16px; line-height: 26px; color: #666; }
.tool { display: flex; flex-direction: column; align-items: center; gap: 9px; padding-top: 11px; border: 1px solid transparent; border-radius: 5px; line-height: 24px; }
.tool svg { width: 36px; height: 36px; }
.w110 { width: 110px; } .w82 { width: 82px; } .w76 { width: 76px; } .w74 { width: 74px; } .w62 { width: 62px; }
.on { background: #d9d9d9; border-color: #8a8a8a; color: #222; }
.bird button:disabled { color: #b4b4b4; }
.stack { padding: 19px 0 0 4px; }
.stack button { display: flex; align-items: center; gap: 8px; height: 36px; white-space: nowrap; }
.stack svg { width: 24px; height: 24px; }
.collapse { margin: auto 8px 4px auto; }
.collapse svg { width: 16px; height: 16px; }
.views { flex: 1; min-height: 0; display: flex; background: #fff; }
.strip { display: flex; width: 38px; flex: none; border-right: 1px solid #999; background: #f0f0f0; }
.gutter { width: 13px; padding: 14px 0 0 4px; }
.gutter svg { width: 8px; height: 6px; }
.gutter svg + svg { margin-top: 120px; }
.strip-col { width: 22px; display: flex; flex-direction: column; }
.strip-col .scrollbar { flex: 1; justify-content: space-between; }
.strip-col .thumb { height: 94%; margin-bottom: auto; }
.corner { height: 25px; background: #dcdcdc; }
.view { display: flex; flex-direction: column; min-width: 0; }
.vehicle { flex: 1055 0 0; border-right: 1px solid #999; }
.world { flex: 822 0 0; }
.view-body { position: relative; flex: 1; }
.legend { display: flex; gap: 10px; flex: none; height: 22px; padding-left: 4px; color: #222; font: 16px/22px "Liberation Sans", sans-serif; white-space: nowrap; }
.legend li { display: flex; align-items: center; gap: 3px; }
.legend svg { height: 18px; fill: none; stroke: #222; stroke-width: 2; }
.k-line { width: 44px; } .k-dash { width: 24px; stroke-dasharray: 8 4; }
.k-radar, .k-ultra { width: 16px; height: 17px; border: 2px solid #ee5a4f; background: #fce8e6; }
.k-ultra { border-color: #4f7a40; background: #eaf0e9; }
.k-dot { width: 15px; height: 15px; border-radius: 50%; background: #df2f20; }
.playback { flex: none; height: 114px; display: grid; grid-template-columns: 46px minmax(0, 1fr) 46px; grid-template-rows: 32px 24px; column-gap: 37px; row-gap: 8px; align-content: center; align-items: center; padding: 12px 298px 0 301px; border-top: 2px solid #909090; font-size: 17px; }
.pb { width: 27px; height: 27px; display: grid; place-items: center; border: 1px solid #c8c8c8; border-radius: 5px; background: #f4f4f4; }
.pb svg { width: 12px; height: 16px; }
.play { grid-area: 1 / 2; justify-self: center; width: 32px; height: 32px; }
.play svg { width: 24px; height: 24px; }
.speed { grid-area: 1 / 2; justify-self: end; display: flex; align-items: center; text-align: center; }
.speed span { width: 67px; }
.t-now { grid-area: 2 / 1; }
#seek { grid-area: 2 / 2; width: 100%; height: 24px; margin: 0; appearance: none; background: none; }
#seek::-webkit-slider-runnable-track { height: 9px; border: 1px solid #c4c4c4; background: #fff; }
#seek::-webkit-slider-thumb { appearance: none; width: 25px; height: 22px; margin-top: -6px; background: #8a8a8a; clip-path: polygon(0 0, 100% 0, 100% 65%, 50% 100%, 0 65%, 0 8%, 6% 8%, 6% 61%, 50% 92%, 94% 61%, 94% 8%, 0 8%); }
.t-end { grid-area: 2 / 3; text-align: right; }
```
FILE: script.js
```js
const NS = 'http://www.w3.org/2000/svg';

function el(parent, name, attrs, text) {
  const node = document.createElementNS(NS, name);
  for (const k in attrs) node.setAttribute(k, attrs[k]);
  if (text !== undefined) node.textContent = text;
  parent.appendChild(node);
  return node;
}

/* Sets up scales for the drawing area left inside the margins. */
function area(svg, m, xr, yr) {
  const w = svg.clientWidth, h = svg.clientHeight;
  svg.replaceChildren();
  const a = { l: m.l, t: m.t, r: w - m.r, b: h - m.b };
  a.x = v => a.l + (v - xr[0]) / (xr[1] - xr[0]) * (a.r - a.l);
  a.y = v => a.b - (v - yr[0]) / (yr[1] - yr[0]) * (a.b - a.t);
  return a;
}
const label = (svg, x, y, s, anchor, cls) => el(svg, 'text', { x, y, 'text-anchor': anchor || 'middle', class: cls || '' }, s);
const vlabel = (svg, x, y, s) => el(svg, 'text', { x: 0, y: 0, 'text-anchor': 'middle', class: 'plabel', transform: `translate(${x} ${y}) rotate(-90)` }, s);

/* ---------- scopes ---------- */
function scopeAxes(svg, a, ys) {
  el(svg, 'rect', { class: 'frame', x: a.l, y: a.t, width: a.r - a.l, height: a.b - a.t });
  let g = '', t = '';
  for (let i = 1; i < 10; i++) {
    const x = Math.round(a.x(i)) + .5;
    g += `M${x} ${a.t}V${a.b}`;
    t += `M${x} ${a.t}v8M${x} ${a.b}v-8`;
  }
  for (const v of ys) {
    const y = Math.round(a.y(v)) + .5;
    g += `M${a.l} ${y}H${a.r}`;
    t += `M${a.l} ${y}h9M${a.r} ${y}h-9`;
    label(svg, a.l - 4, y + 8, v, 'end');
  }
  el(svg, 'path', { class: 'grid', d: g });
  el(svg, 'path', { class: 'tick', d: t });
  for (let i = 0; i <= 10; i++) label(svg, a.x(i), a.b + 21, i);
}

function drawScopeA() {
  const svg = document.getElementById('plot-scope-a');
  const a = area(svg, { l: 32, t: 14, r: 19, b: 31 }, [0, 10], [77.6, 242.8]);
  scopeAxes(svg, a, [240, 220, 200, 180, 160, 140, 120, 100, 80]);
}

const signals = {
  'c-orange': [0, .003, 2, .005, 4, .007, 6, .009, 9.07, .012],
  'c-yellow': [0, .03, .2, .049, .8, .037, 1.5, .035, 2.1, .023, 2.4, .02, 3, .017, 3.2, .027, 3.5, .025, 3.7, .044, 4.2, .042, 4.7, .039, 5, .038, 6.5, .037, 7.3, .038, 8.3, .04, 9.07, .04],
  'c-purple': [0, .02, .2, .013, .8, .02, 1.3, .022, 2.1, .025, 2.5, .027, 3.2, .018, 6, .016, 9.07, .014],
  'c-green': [0, .091, .1, .098, .3, .102, .9, .1, 1.1, .103, 2.3, .088, 2.4, .083, 2.5, .067, 2.6, .073, 2.7, .087, 2.8, .078, 2.9, .063, 3, .043, 3.1, .098, 3.2, .102, 3.6, .098, 3.8, .103, 4.5, .098, 4.6, .077, 4.7, .06, 4.8, .047, 4.9, .037, 5, .031, 5.2, .028, 5.5, .024, 6, .022, 6.5, .019, 7.6, .021, 8.9, .025, 9.07, .025]
};
const position = [0, .153, .45, .141, 1, .133, 1.5, .118, 2, .102, 2.27, .088, 2.68, .079, 3.01, .067, 3.18, .065, 3.42, .055, 3.69, .043, 4, .031, 4.37, .016, 4.6, .004, 5, -.004, 5.5, -.01, 6, -.015, 7, -.021, 8, -.027, 9.07, -.033];

function drawScopeB() {
  const svg = document.getElementById('plot-scope-b');
  const a = area(svg, { l: 27, t: 31, r: 19, b: 31 }, [0, 10], [-.2145, 2.061]);
  scopeAxes(svg, a, [2, 1.5, 1, .5, 0]);
  label(svg, (a.l + a.r) / 2, a.t - 9, 'Penalty from Radar sensor, Position Errof, Time Penalty, Velocity, Angle', 'middle', 'ptitle');
  for (const cls in signals) {
    const p = signals[cls];
    let d = `M${a.x(p[0])} ${a.y(p[1])}`;
    for (let i = 2; i < p.length; i += 2) d += `H${a.x(p[i])}V${a.y(p[i + 1])}`;
    el(svg, 'path', { class: 'sig ' + cls, d });
  }
  let d = '';
  for (let i = 0; i < position.length; i += 2) d += `${i ? 'L' : 'M'}${a.x(position[i])} ${a.y(position[i + 1])}`;
  el(svg, 'path', { class: 'sig c-blue', d });
}

/* ---------- training reward ---------- */
const average = '0,22;2,17;3,10;4,2;5,-5;7,-15;9,-2;11,9;12,11;13,8;39,8;40,2;41,-5;43,-15;44,-17;46,-11;47,-3;48,7;50,4;51,12;52,13;53,7;56,6;57,2;59,9;61,9;62,13;64,10;65,14;66,11;68,14;70,8;71,2;73,-14;74,-5;76,-9;78,-9;79,-15;84,-17;85,-4;88,-2;89,-1;90,-13;94,-14;95,-16;98,-13;101,-9;103,-3;106,-2;107,-6;111,-5;112,-2;118,-3;119,8;121,12;123,12;124,3;126,-4;128,-1;135,-3;138,-4;142,-6;143,-4;145,1;146,5;148,3;149,-3;152,-6;166,-6;168,-3;170,0;172,-1;174,2;176,0;178,3;180,2;182,11;186,11;188,6;190,8;192,6;193,12;194,12;196,22;197,26;199,22;200,16;202,21;204,22;208,18;211,9;212,19;214,21;215,23;217,15;219,20;221,24;222,20;223,28;226,34;228,31;230,38;232,26;234,25;235,17;237,24;240,18;241,26;243,28;245,32;246,20;249,18;251,23;252,18;253,29;255,28;257,36;258,24;260,21;261,16;263,20;264,33;266,38;268,37;269,22;271,23;273,28;275,34;277,35;280,37;282,33;284,27;286,22;288,26;290,33;291,38;293,39;295,33;297,30;299,26;301,34;303,39;305,43;306,32;308,36;309,32;310,44;311,43;312,35;314,33;315,17;317,25;319,31;321,26;323,28;325,21;326,30;328,25;330,31;331,20;333,24;334,30;336,29;337,65;338,62;339,55;340,61;343,54;344,59;345,57;346,61;347,32;349,30;351,26;352,44;354,48;355,38;356,70;357,49;359,49;360,62;361,31;363,34;364,38;365,27;367,22;369,13;371,27;374,26;375,41;376,35;378,36;379,41;381,46;382,42;383,94;384,93;385,74;387,76;388,31;391,30;393,27;394,46;395,45;396,64;397,67;398,65;399,42;400,93;401,111;402,146;403,191;404,235;405,190;406,195'.split(';').map(s => s.split(',').map(Number));
const reward = '0,22;1,20;2,10;3,-19;4,-20;5,-20;6,-19;7,-14;8,20;9,10;10,7;11,9;12,10;13,8;39,8;40,-20;41,-20;42,-20;43,-20;44,-6;45,-5;46,-6;47,23;48,27;49,-18;50,-5;51,33;52,28;53,-5;54,-18;55,-3;56,31;57,8;58,5;59,9;60,-6;61,28;62,25;63,9;64,-4;65,9;66,18;67,25;68,20;69,-18;70,-7;71,-6;72,-18;73,-18;74,23;75,-18;76,-18;77,-18;78,-18;79,-7;80,-18;81,-17;82,-18;83,-17;84,-18;85,47;86,-15;87,-14;88,-7;89,-18;90,-12;91,-17;92,-12;93,-8;94,-18;95,-18;96,-17;97,-3;98,-18;99,-5;100,-8;101,-18;102,22;103,-6;104,-4;105,-6;106,-7;107,-6;109,-2;110,-6;111,-4;112,6;113,-5;114,-3;116,-2;117,-3;118,-7;119,51;120,-2;121,21;122,-5;123,-6;124,0;125,2;126,-7;127,-3;128,5;129,-6;130,-2;131,-3;132,-7;133,6;134,-7;135,-2;136,-3;137,-7;140,-6;142,-6;143,11;144,11;145,-6;146,11;147,-7;149,-6;166,-6;167,5;168,-6;169,8;170,-5;171,-6;172,-1;173,12;174,-4;175,3;176,-5;177,5;179,5;180,4;181,6;182,33;183,9;184,5;186,4;188,11;189,3;190,14;191,0;192,5;193,33;194,5;195,51;196,10;197,17;198,29;199,6;200,7;201,36;202,26;203,10;204,32;205,3;206,28;207,20;208,6;209,8;210,2;211,12;212,72;213,2;214,24;215,4;216,6;217,38;218,5;219,42;220,8;221,31;222,12;223,47;224,27;225,34;227,35;228,25;229,37;230,58;231,0;232,8;233,28;234,30;235,12;236,18;237,35;238,9;239,13;240,7;241,64;242,39;243,16;244,35;245,5;246,15;247,22;248,14;249,33;250,33;251,6;252,2;253,72;254,24;255,38;256,30;257,10;258,17;260,19;262,20;263,21;264,78;265,30;266,32;267,12;268,36;269,7;270,20;271,34;272,39;273,38;274,20;275,40;276,34;277,39;279,35;281,38;283,24;284,12;285,30;286,9;287,36;288,30;289,47;290,43;291,40;292,31;294,28;296,31;297,25;298,14;299,33;300,26;301,72;302,36;303,30;304,32;305,48;306,9;307,61;308,19;309,18;310,109;311,8;312,17;314,19;315,17;316,33;317,26;318,14;319,58;320,5;321,23;322,35;323,12;324,25;325,8;326,72;327,15;328,7;329,26;330,35;331,17;332,14;333,25;334,57;335,40;336,14;337,196;338,18;339,14;340,60;341,14;342,176;343,12;344,38;345,40;346,39;347,30;348,11;349,15;350,48;351,23;352,125;353,13;354,32;355,1;356,183;357,14;358,21;359,25;360,65;361,10;362,40;363,27;364,49;365,14;366,5;367,25;368,16;369,4;370,34;371,47;372,35;373,7;374,10;375,106;376,8;377,47;378,3;379,45;380,104;381,30;382,29;383,263;384,42;385,4;386,30;387,38;388,47;389,32;390,4;391,20;392,30;393,41;394,131;395,5;396,116;397,37;398,38;399,14;400,259;401,200;402,215;403,269;404,235;405,30;406,226'.split(';').map(s => s.split(',').map(Number));

/* One value for each episode, with straight runs between the listed ones. */
function perEpisode(points) {
  const out = [];
  for (let i = 1; i < points.length; i++) {
    const [x0, y0] = points[i - 1], [x1, y1] = points[i];
    for (let x = x0; x < x1; x++) out.push([x, y0 + (y1 - y0) * (x - x0) / (x1 - x0)]);
  }
  out.push(points[points.length - 1]);
  return out;
}

function drawTraining() {
  const svg = document.getElementById('plot-training');
  const a = area(svg, { l: 74, t: 79, r: 38, b: 81 }, [0, 407], [-97, 345]);
  el(svg, 'rect', { x: a.l, y: a.t, width: a.r - a.l, height: a.b - a.t, fill: '#fff' });
  el(svg, 'path', { class: 'axis', d: `M${a.l} ${a.t}V${a.b}H${a.r}` });
  let t = '';
  for (let v = -50; v <= 300; v += 50) {
    t += `M${a.l} ${a.y(v)}h12`;
    label(svg, a.l - 6, a.y(v) + 6, v, 'end');
  }
  for (let v = 0; v <= 400; v += 50) {
    if (v) t += `M${a.x(v)} ${a.b}v-12`;
    label(svg, a.x(v), a.b + 24, v);
  }
  el(svg, 'path', { class: 'axis', d: t });
  label(svg, (a.l + a.r) / 2, a.t - 7, 'AIV_robot에 대한 에피소드 보상(rlDDPGAgent 사용)', 'middle', 'ptitle');
  label(svg, (a.l + a.r) / 2, a.b + 45, '에피소드 번호', 'middle', 'plabel');
  vlabel(svg, 28, (a.t + a.b) / 2, '에피소드 보상');
  const line = (pts, cls) => el(svg, 'path', { class: cls, d: pts.map(([x, y], i) => `${i ? 'L' : 'M'}${a.x(x).toFixed(1)} ${a.y(y).toFixed(1)}`).join('') });
  const marks = (pts, cls, r) => el(svg, 'path', { class: cls, d: pts.map(([x, y]) => `M${(a.x(x) - r).toFixed(1)} ${a.y(y).toFixed(1)}a${r} ${r} 0 1 0 ${2 * r} 0a${r} ${r} 0 1 0 ${-2 * r} 0`).join('') });
  const ep = perEpisode(reward), avg = perEpisode(average);
  line(ep, 'line-ep'); marks(ep, 'mark-ep', 2.6);
  line(avg, 'line-avg'); marks(avg, 'mark-avg', 2.2);
  line([[0, 1], [20, 0], [90, 0], [180, .5], [230, 1], [300, 1.7], [370, 2.2], [406, 2.7]], 'line-q0');
}

/* ---------- bird's-eye views ----------
   Objects are in world metres as [X, Y]; the vehicle pose maps them to the vehicle view. */
const pose = { X: -.46, Y: 10.76, c: .8332, s: .553 };
const walls = [
  [20.06, 22.63, -7.33, 15.73], [-1.48, 21.53, -7.33, -4.81],
  [-1.46, 16.59, 14.85, 17.4], [-4.03, -1.5, -7.43, 17.61]
];
const room = { X0: -1.44, X1: 20.06, Y0: -5.22, Y1: 14.83 };
const cones = [
  [17.85, 8.16], [17.51, 1.76], [14.8, 5.71], [14.07, 1.29], [12.18, 12.35], [9.13, 10.14],
  [6.19, 12.19], [5, -1.31], [3.47, 7.93], [.96, 10.4], [.59, 5.14], [11.7, -1.79, 56.4], [9.13, 1.24, 56.4]
];
const humans = [[17.05, 4.24], [8.76, 12.76], [8.42, -2.86]];

function objectBox(X, Y, along, across, deg) {
  const f = (deg || 0) * Math.PI / 180, u = [Math.sin(f), -Math.cos(f)], v = [Math.cos(f), Math.sin(f)];
  return [[1, 1], [1, -1], [-1, -1], [-1, 1]].map(([p, q]) => [X + (p * along * u[0] + q * across * v[0]) / 2, Y + (p * along * u[1] + q * across * v[1]) / 2]);
}

function mapAxes(svg, a, xr, yr, title, xl, yl) {
  el(svg, 'rect', { class: 'frame', x: a.l + .5, y: a.t + .5, width: a.r - a.l, height: a.b - a.t });
  el(svg, 'path', { class: 'axis', d: `M${a.l} ${a.t}H${a.r}M${a.l} ${a.b}H${a.r}` });
  let gv = '', gh = '', t = '';
  for (let v = Math.ceil(xr[1]); v <= xr[0]; v++) {
    const x = Math.round(a.x(v)) + .5, big = v % 10 === 0, n = big ? 10 : 5;
    t += `M${x} ${a.t}v${n}M${x} ${a.b}v${-n}`;
    if (big) { gv += `M${x} ${a.t}V${a.b}`; label(svg, x, a.b + 23, v); }
  }
  for (let v = Math.ceil(yr[0]); v <= yr[1]; v++) {
    const y = Math.round(a.y(v)) + .5, big = v % 3 === 0, n = big ? 9 : 4;
    t += `M${a.l} ${y}h${n}M${a.r} ${y}h${-n}`;
    if (big) { gh += `M${a.l} ${y}H${a.r}`; label(svg, a.l - 7, y + 6, v, 'end'); }
  }
  el(svg, 'path', { class: 'gv', d: gv });
  el(svg, 'path', { class: 'gh', d: gh });
  el(svg, 'path', { class: 'tick', d: t });
  label(svg, (a.l + a.r) / 2, a.t - 8, title, 'middle', 'ptitle');
  label(svg, (a.l + a.r) / 2, a.b + 53, xl, 'middle', 'plabel');
  vlabel(svg, a.l - 51, (a.t + a.b) / 2, yl);
}

function scene(svg, a, map, id, before) {
  const clip = el(el(svg, 'defs', {}), 'clipPath', { id });
  el(clip, 'rect', { x: a.l, y: a.t, width: a.r - a.l, height: a.b - a.t });
  const g = el(svg, 'g', { 'clip-path': `url(#${id})` });
  const path = pts => 'M' + pts.map(map).map(p => p.map(n => n.toFixed(1)).join(' ')).join('L');
  const { X0, X1, Y0, Y1 } = room;
  el(g, 'path', { fill: '#fff', d: path([[X0, Y0], [X1, Y0], [X1, Y1], [X0, Y1]]) + 'Z' });
  if (before) before(g);
  el(g, 'path', { class: 'road-wide', d: path([[X0, Y1 - .08], [X1, Y1 - .08]]) + path([[X0, Y0], [X1, Y0]]) });
  el(g, 'path', { class: 'road', d: path([[X0, Y0], [X0, Y1], [X1, Y1], [X1, Y0]]) + 'Z' });
  for (const [x0, x1, y0, y1] of walls) el(g, 'path', { class: 'wall', d: path([[x0, y0], [x1, y0], [x1, y1], [x0, y1]]) + 'Z' });
  for (const [X, Y, r] of cones) el(g, 'path', { class: 'cone', d: path(objectBox(X, Y, .48, .3, r)) + 'Z' });
  el(g, 'path', { class: 'bush', d: path(objectBox(16.8, -1.59, .48, .3)) + 'Z' });
  for (const [X, Y] of humans) el(g, 'path', { class: 'human', d: path(objectBox(X, Y, .5, 1.75)) + 'Z' });
  el(g, 'path', { class: 'ego', d: path(objectBox(pose.X, pose.Y, .55, .6, 56.4)) + 'Z' });
  return g;
}

function drawVehicle() {
  const svg = document.getElementById('plot-vehicle');
  const xr = [29.14, -16.42], yr = [-34.2, 43.1];
  const a = area(svg, { l: 79, t: 40, r: 26, b: 68 }, xr, yr);
  mapAxes(svg, a, xr, yr, 'Vehicle Coordinates View', 'Lateral Distance (m)', 'Longitudinal Distance (m)');
  const P = (lat, lon) => `${a.x(lat).toFixed(1)} ${a.y(lon).toFixed(1)}`;
  const k = (a.b - a.t) / (yr[1] - yr[0]);
  const map = ([X, Y]) => {
    const dX = X - pose.X, dY = Y - pose.Y;
    return [a.x(pose.c * dX - pose.s * dY), a.y(-pose.s * dX - pose.c * dY)];
  };
  const fan = (g, cls, ax, p, q, r) => el(g, 'path', { class: cls, d: `M${P(...ax)}L${P(...p)}A${r * k} ${r * k} 0 0 ${(p[0] - ax[0]) * (q[1] - ax[1]) - (p[1] - ax[1]) * (q[0] - ax[0]) > 0 ? 1 : 0} ${P(...q)}Z` });
  const g = scene(svg, a, map, 'clip-vehicle', layer => {
    fan(layer, 'radar', [0, .44], [5.63, 6.05], [-5.63, 6.05], 7.95);
    for (const m of [1, -1]) {
      fan(layer, 'ultra', [.3 * m, .1], [1.28 * m, 2.03], [2.2 * m, -.37], 2.3);
      fan(layer, 'ultra', [.3 * m, .1], [2.14 * m, .66], [1.28 * m, -1.74], 2.3);
      fan(layer, 'ultra', [-.05 * m, -.1], [2.46 * m, -2.08], [-.34 * m, -3.16], 3.2);
    }
  });
  el(g, 'circle', { class: 'det', cx: a.x(.37), cy: a.y(2.33), r: 8 });
  el(g, 'path', { class: 'udet', d: `M${P(.85, .1)}L${P(.85, -.35)}M${P(-.95, .1)}L${P(-.95, -.35)}M${P(.8, -.4)}L${P(.6, -.65)}` });
}

function drawWorld() {
  const svg = document.getElementById('plot-world');
  const xr = [21.05, -11.6], yr = [-27.68, 46.84];
  const a = area(svg, { l: 81, t: 34, r: 23, b: 68 }, xr, yr);
  mapAxes(svg, a, xr, yr, 'World Coordinates View', 'Y (m)', 'X (m)');
  scene(svg, a, ([X, Y]) => [a.x(Y), a.y(X)], 'clip-world');
}

function drawAll() { drawScopeA(); drawScopeB(); drawTraining(); drawVehicle(); drawWorld(); }
drawAll();
window.addEventListener('resize', drawAll);
```
